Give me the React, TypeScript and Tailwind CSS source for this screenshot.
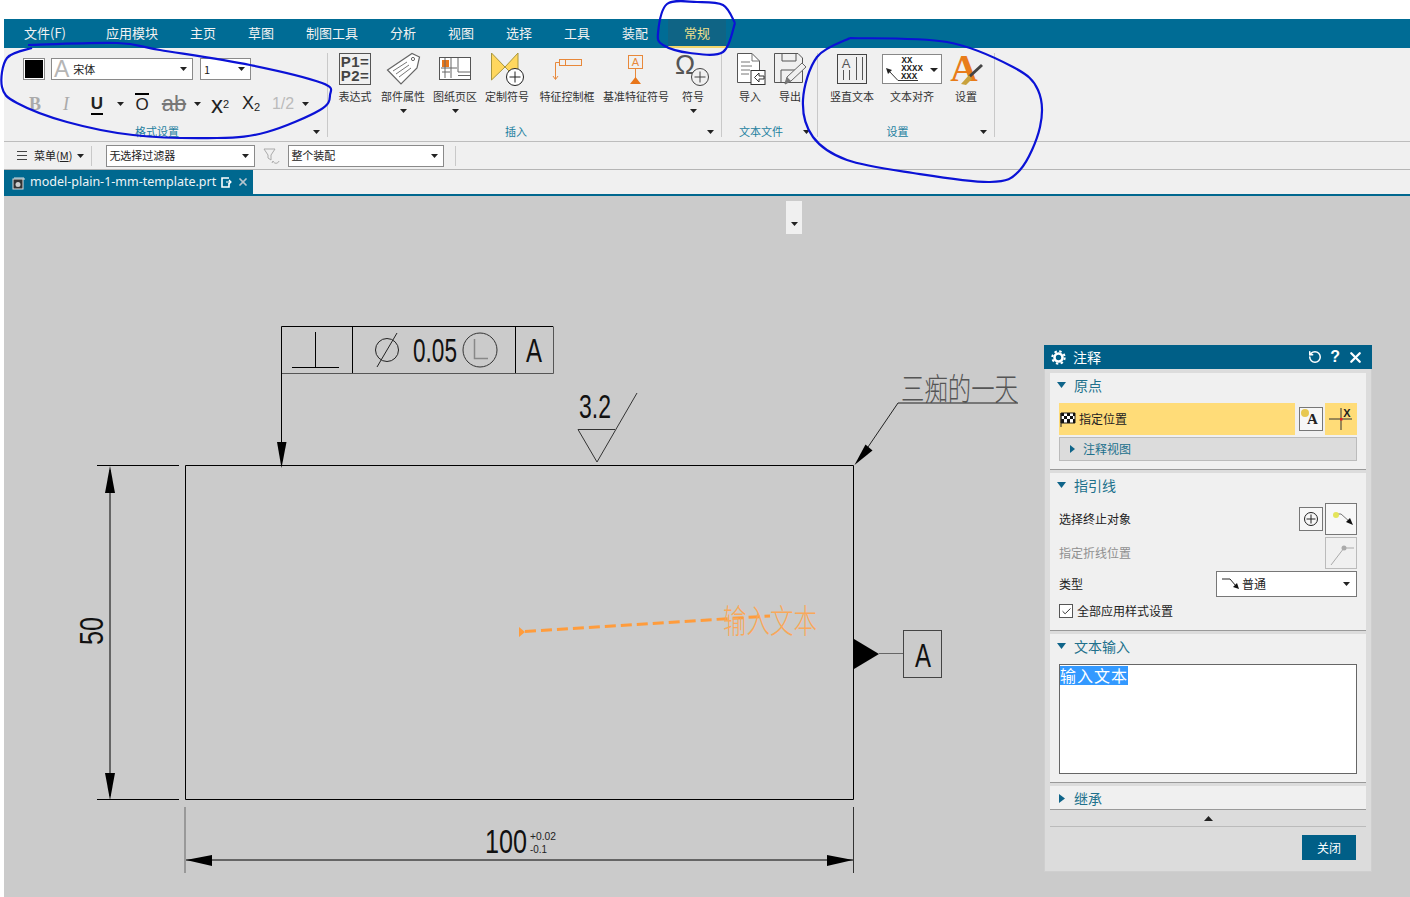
import type { ReactNode } from "react";
import { Check, RotateCw, X } from "lucide-react";

const tabs = ["应用模块", "主页", "草图", "制图工具", "分析", "视图", "选择", "工具", "装配"];

const leftLoop: [number, number][] = [
  [28, 45], [117, 43], [160, 50], [250, 65], [322, 83], [330, 95], [320, 110], [267, 132], [217, 138],
  [133, 135], [67, 122], [17, 103], [2, 87], [7, 58], [32, 48],
];
const topLoop: [number, number][] = [
  [735, 23], [723, 5], [697, 2], [667, 4], [658, 33], [663, 45], [690, 53], [723, 52], [735, 23],
];
const rightLoop: [number, number][] = [
  [850, 38], [947, 42], [1013, 67], [1038, 90], [1040, 127], [1020, 170], [990, 182], [913, 173],
  [847, 160], [813, 137], [803, 100], [817, 57], [850, 38],
];

// catmull-rom through the hand drawn pen points
function smooth(pts: [number, number][]) {
  let d = `M${pts[0][0]} ${pts[0][1]}`;
  for (let i = 0; i < pts.length - 1; i++) {
    const p0 = pts[Math.max(i - 1, 0)];
    const p1 = pts[i];
    const p2 = pts[i + 1];
    const p3 = pts[Math.min(i + 2, pts.length - 1)];
    d += ` C${p1[0] + (p2[0] - p0[0]) / 6} ${p1[1] + (p2[1] - p0[1]) / 6} ${p2[0] - (p3[0] - p1[0]) / 6} ${p2[1] - (p3[1] - p1[1]) / 6} ${p2[0]} ${p2[1]}`;
  }
  return d;
}

function Caret({ className = "text-[#222]" }: { className?: string }) {
  return (
    <svg width="7" height="4" viewBox="0 0 7 4" className={`shrink-0 ${className}`}>
      <path d="M0 0H7L3.5 4Z" fill="currentColor" />
    </svg>
  );
}

function Tool({ x, w, label, more, children }: { x: number; w: number; label: string; more?: boolean; children: ReactNode }) {
  return (
    <div className="flex shrink-0 flex-col items-center" style={{ width: w }}>
      <svg width={w} height="35" viewBox={`${x} 52 ${w} 35`} fill="none" className="overflow-visible">
        {children}
      </svg>
      <span className="text-[11px] leading-[18px] whitespace-nowrap text-[#333]">{label}</span>
      {more && (
        <div className="mt-[4px]">
          <Caret />
        </div>
      )}
    </div>
  );
}

function Group({ label, className, children }: { label: string; className: string; children: ReactNode }) {
  return (
    <div className={`flex h-full shrink-0 flex-col ${className}`}>
      <div className="min-h-0 flex-1">{children}</div>
      <div className="mb-[2px] flex h-[16px] items-center pr-[5px]">
        <span className="flex-1 text-center text-[11px] leading-none text-[#1d7f9f]">{label}</span>
        <div className="flex w-[12px] justify-center pt-px">
          <Caret />
        </div>
      </div>
    </div>
  );
}

function Sep() {
  return <div className="mt-[5px] mb-[4px] w-px shrink-0 bg-[#c9c9c9]" />;
}

function Combo({ className, children }: { className: string; children: ReactNode }) {
  return (
    <div className={`flex h-[22px] items-center justify-between border border-[#8a8a8a] bg-white pr-[5px] text-[11px] text-[#222] ${className}`}>
      {children}
      <Caret />
    </div>
  );
}

function SectionHead({ label, open = true }: { label: string; open?: boolean }) {
  return (
    <div className="flex h-[24px] items-center gap-[8px] pl-[7px] text-[14px] leading-none text-[#21708c]">
      {open ? (
        <svg width="9" height="6" viewBox="0 0 9 6" className="shrink-0 text-[#0f6489]">
          <path d="M0 0H9L4.5 6Z" fill="currentColor" />
        </svg>
      ) : (
        <svg width="6" height="9" viewBox="0 0 6 9" className="ml-[2px] mr-[1px] shrink-0 text-[#0f6489]">
          <path d="M0 0L6 4.5L0 9Z" fill="currentColor" />
        </svg>
      )}
      {label}
    </div>
  );
}

export default function App() {
  return (
    <div className="relative flex h-[897px] w-[1410px] flex-col overflow-hidden bg-white pt-[19px] pl-[4px] font-['Noto_Sans_CJK_SC',sans-serif]">
      {/* menu tabs */}
      <div className="flex h-[29px] shrink-0 items-center bg-[#006c95] pb-[2px] pl-[20px] text-[13px] text-[#f2f2f2]">
        <span className="mr-[40px]">文件(F)</span>
        {tabs.map((t) => (
          <span key={t} className="mr-[32px]">
            {t}
          </span>
        ))}
        <div className="-mb-[2px] -ml-[12px] flex h-[29px] w-[58px] flex-col items-center bg-[#0f6485]">
          <span className="flex-1 leading-[27px] text-[#efe08c]">常规</span>
          <div className="h-[2px] w-full bg-[#f3d56b]" />
        </div>
      </div>

      {/* ribbon */}
      <div className="flex h-[94px] shrink-0 border-b border-[#bdbdbd] bg-[#f0f0f0]">
        <Group label="格式设置" className="w-[323px]">
          <div className="flex items-center pt-[10px] pl-[19px]">
            <div className="flex size-[22px] items-center justify-center border border-[#8a8a8a] bg-white">
              <div className="size-[18px] bg-black" />
            </div>
            <Combo className="ml-[6px] w-[142px] pl-[2px]">
              <span className="flex items-center gap-[4px]">
                <span className="font-['Liberation_Sans',sans-serif] text-[23px] leading-none text-[#b5b5b5]">A</span>
                宋体
              </span>
            </Combo>
            <Combo className="ml-[7px] w-[51px] pl-[3px]">
              <span>1</span>
            </Combo>
          </div>
          <div className="mt-[12px] flex h-[24px] items-center pl-[16px] text-center font-['Liberation_Sans',sans-serif] text-[#222]">
            <span className="w-[30px] font-['Liberation_Serif',serif] text-[18px] font-bold text-[#aaa]">B</span>
            <span className="w-[32px] font-['Liberation_Serif',serif] text-[18px] text-[#aaa] italic">I</span>
            <span className="w-[30px] text-[17px] leading-[18px] font-bold">
              <span className="border-b-2 border-black">U</span>
            </span>
            <span className="flex w-[16px] justify-center">
              <Caret />
            </span>
            <span className="w-[28px] text-[17px] leading-none">
              <span className="border-t-2 border-black">O</span>
            </span>
            <span className="w-[36px] text-[22px] leading-none font-light text-[#777] line-through">ab</span>
            <span className="flex w-[10px] justify-center">
              <Caret />
            </span>
            <span className="w-[36px] pt-[2px] text-[24px] leading-none">
              x<sup className="text-[11px]">2</sup>
            </span>
            <span className="w-[26px] pb-[3px] text-[18px] leading-none">
              X<sub className="text-[11px]">2</sub>
            </span>
            <span className="w-[38px] text-[16px] text-[#bbb]">1/2</span>
            <span className="flex w-[6px] justify-center">
              <Caret />
            </span>
          </div>
        </Group>
        <Sep />
        <Group label="插入" className="w-[393px]">
          <div className="flex pt-[4px] pl-[8px]">
            <div className="flex w-[38px] shrink-0 flex-col items-center">
              <div className="mt-px mb-[2px] flex h-[32px] w-[32px] flex-col justify-center border border-[#555] font-['Liberation_Sans',sans-serif] text-[15px] leading-[14px] font-bold tracking-[0.5px] text-[#444]">
                <span className="text-center">P1=</span>
                <span className="text-center">P2=</span>
              </div>
              <span className="text-[11px] leading-[18px] whitespace-nowrap text-[#333]">表达式</span>
            </div>
            <Tool x={374} w={58} label="部件属性" more>
              <path d="M387.5 70L412 53.5L419.5 57L417 68L401 84Z" stroke="#666" fill="#fff" strokeWidth="1.2" />
              <circle cx="413" cy="59" r="1.6" stroke="#666" />
              <path d="M393 71L407 62M396 74L409 65M399 77L411 68" stroke="#777" />
            </Tool>
            <Tool x={432} w={46} label="图纸页区" more>
              <rect x="439.5" y="57.5" width="31" height="22" stroke="#555" fill="#fff" />
              <rect x="442" y="60" width="7" height="7" fill="#e8761a" />
              <path d="M441 68H457M451 58V78M445 58V78M458 58V72M458 72H470M458 75.5H470M442 72H450" stroke="#666" />
            </Tool>
            <Tool x={478} w={58} label="定制符号">
              <path d="M491.5 53L505 67L518 53V80L505 67L491.5 80Z" fill="#ffd75e" stroke="#a8963e" />
              <circle cx="515" cy="77" r="8.5" fill="#fff" stroke="#222" />
              <path d="M515 71.5V82.5M509.5 77H520.5" stroke="#222" />
            </Tool>
            <Tool x={536} w={62} label="特征控制框">
              <rect x="559.5" y="59.5" width="22" height="6" stroke="#e8883a" />
              <path d="M565.5 59.5V65.5M559 62.5H555.5V79M553 76L555.5 79.5L558 76" stroke="#e8883a" />
            </Tool>
            <Tool x={598} w={76} label="基准特征符号">
              <rect x="628.5" y="55.5" width="14" height="13" stroke="#e8883a" />
              <text x="635.5" y="66" textAnchor="middle" fontSize="11" fontFamily="Liberation Sans" fill="#e8883a">
                A
              </text>
              <path d="M635.5 68V78" stroke="#e8883a" />
              <path d="M630 84L635.5 77L641 84Z" fill="#e8761a" />
            </Tool>
            <Tool x={674} w={38} label="符号" more>
              <text x="685" y="74" textAnchor="middle" fontSize="27" fontFamily="Liberation Sans" fill="#555">
                Ω
              </text>
              <circle cx="700" cy="77" r="8.5" fill="#f0f0f0" stroke="#444" />
              <path d="M700 71.5V82.5M694.5 77H705.5" stroke="#444" />
            </Tool>
          </div>
        </Group>
        <Sep />
        <Group label="文本文件" className="w-[95px]">
          <div className="flex pt-[4px] pl-[10px]">
            <Tool x={732} w={36} label="导入">
              <path d="M737.5 53.5H752L759.5 61V82.5H737.5Z" fill="#fff" stroke="#555" />
              <path d="M752 53.5V61H759.5M741 62H750M741 66H752M741 70H750M741 74H749" stroke="#777" />
              <rect x="751" y="70.5" width="14" height="14" fill="#fff" stroke="#333" />
              <path d="M764 76H759V73L754.5 77.5L759 82V79H764Z" fill="#fff" stroke="#333" />
            </Tool>
            <div className="w-[4px] shrink-0" />
            <Tool x={772} w={36} label="导出">
              <path d="M774.5 53.5H798L802.5 58V82.5H774.5Z" fill="#f0f0f0" stroke="#555" />
              <path d="M782 54V61H796V54M781 82V70H796" stroke="#555" />
              <path d="M785 84L787 77L802 63L806 67L791 81Z" fill="#f0f0f0" stroke="#666" />
              <path d="M785 84L787 77L791 81Z" fill="#777" />
            </Tool>
          </div>
        </Group>
        <Sep />
        <Group label="设置" className="w-[176px]">
          <div className="flex pt-[4px] pl-[8px]">
            <Tool x={826} w={52} label="竖直文本">
              <rect x="837.5" y="54.5" width="29" height="29" stroke="#444" />
              <text x="846" y="68" textAnchor="middle" fontSize="13" fontFamily="Liberation Sans" fill="#555">
                A
              </text>
              <path d="M843.5 70V80M849.5 70V80M856.5 57V80M862.5 57V80" stroke="#555" />
            </Tool>
            <Tool x={878} w={68} label="文本对齐">
              <rect x="882.5" y="54.5" width="59" height="29" stroke="#888" fill="#fff" />
              <text x="907" y="63" textAnchor="middle" fontSize="9" fontWeight="700" fontFamily="Liberation Mono" fill="#222">
                XX
              </text>
              <text x="912" y="71" textAnchor="middle" fontSize="9" fontWeight="700" fontFamily="Liberation Mono" fill="#222">
                XXXX
              </text>
              <text x="909" y="79" textAnchor="middle" fontSize="9" fontWeight="700" fontFamily="Liberation Mono" fill="#222">
                XXX
              </text>
              <path d="M889 71L898 80.5H918" stroke="#333" />
              <path d="M886 68L892 70L888 74Z" fill="#222" />
              <path d="M930 68H938L934 72Z" fill="#222" />
            </Tool>
            <Tool x={946} w={40} label="设置">
              <text x="964" y="81" textAnchor="middle" fontSize="38" fontWeight="700" fontFamily="Liberation Serif" fill="#e87c1a">
                A
              </text>
              <path d="M982 65L969 77" stroke="#444" strokeWidth="3" />
              <path d="M969 75L972 79L966 85L961 84Z" fill="#c9a23c" />
            </Tool>
          </div>
        </Group>
        <Sep />
      </div>

      {/* selection toolbar */}
      <div className="flex h-[28px] shrink-0 items-center border-b border-[#b5b5b5] bg-[#f0f0f0] pl-[13px] text-[11px] text-[#222]">
        <div className="flex h-[9px] w-[10px] flex-col justify-between">
          <div className="h-px bg-[#444]" />
          <div className="h-px bg-[#444]" />
          <div className="h-px bg-[#444]" />
        </div>
        <span className="ml-[7px]">
          菜单(<span className="underline">M</span>)
        </span>
        <div className="ml-[5px]">
          <Caret />
        </div>
        <div className="ml-[7px] h-[20px] w-px bg-[#c9c9c9]" />
        <Combo className="ml-[14px] w-[149px] pl-[2px]">
          <span>无选择过滤器</span>
        </Combo>
        <svg width="18" height="18" viewBox="0 0 18 18" fill="none" className="ml-[8px]">
          <path d="M1 2H12L8 8V13L5 11V8Z" stroke="#aaa" />
          <path d="M16 14C15 17 11 17 10 14M10 14L9 16" stroke="#aaa" />
        </svg>
        <Combo className="ml-[7px] w-[156px] pl-[2px]">
          <span>整个装配</span>
        </Combo>
        <div className="ml-[11px] h-[20px] w-px bg-[#c9c9c9]" />
      </div>

      {/* file tab */}
      <div className="flex h-[26px] shrink-0 border-b-2 border-[#00688f] bg-[#f0f0f0]">
        <div className="flex w-[249px] items-center bg-[#00688f] pl-[8px] text-[#eef4f7]">
          <svg width="13" height="13" viewBox="0 0 13 13" fill="none" className="mt-[3px] shrink-0">
            <rect x="1" y="2" width="10" height="10" fill="#333" stroke="#ddd" />
            <circle cx="6" cy="7.5" r="2.5" fill="#ccc" />
            <path d="M2 1H12V3" stroke="#ddd" />
          </svg>
          <span className="ml-[5px] w-[185px] font-['Noto_Sans',sans-serif] text-[12.5px] whitespace-nowrap">model-plain-1-mm-template.prt</span>
          <svg width="11" height="11" viewBox="0 0 11 11" fill="none" className="mt-[1px] ml-[6px] shrink-0">
            <path d="M8 1H1V10H8V6" stroke="#fff" strokeWidth="1.6" />
            <path d="M5 5H10M8 3L10 5L8 7" stroke="#fff" strokeWidth="1.2" />
          </svg>
          <X className="ml-[5px] size-[12px] shrink-0 text-[#b7c6cf]" strokeWidth={3.5} />
        </div>
      </div>

      {/* drawing canvas */}
      <div className="relative min-h-0 flex-1 bg-[#cbcbcb]">
        <svg width="1406" height="701" viewBox="4 196 1406 701" fill="none" className="block">
          <g stroke="#000">
            <path d="M185.5 465.5H853.5V799.5H185.5Z" />
            <path d="M352.5 326.5V373.5M515.5 326.5V373.5M281.5 326.5V465M281.5 326.5H553" />
            <path d="M97 465.5H179M97 799.5H179M110 470V796M186 860H853" />
            <path d="M292 367.5H339M315.5 332V367" />
          </g>
          <path d="M282 373.5H553.5V326.5" stroke="#555" />
          <path d="M185 807V873" stroke="#999" strokeWidth="2" />
          <path d="M853.5 807V873" stroke="#333" />
          <path d="M277 442H286.5L281.5 468Z" fill="#000" />
          <path d="M105 493H115L110 466Z" fill="#000" />
          <path d="M105 773H115L110 800Z" fill="#000" />
          <path d="M212 855V866L186 860Z" fill="#000" />
          <path d="M827 855V866L853 860Z" fill="#000" />
          <circle cx="387" cy="350" r="11.5" stroke="#222" />
          <path d="M377 367L397 333" stroke="#222" />
          <text x="413" y="362" fontSize="33" textLength="44" lengthAdjust="spacingAndGlyphs" fontFamily="Liberation Sans" fill="#111">
            0.05
          </text>
          <circle cx="480" cy="350" r="17" stroke="#333" />
          <path d="M474.5 339V358.5H488" stroke="#888" strokeWidth="1.5" />
          <text x="526" y="362" fontSize="33" textLength="16" lengthAdjust="spacingAndGlyphs" fontFamily="Liberation Sans" fill="#111">
            A
          </text>
          <text x="579" y="418" fontSize="33" textLength="32" lengthAdjust="spacingAndGlyphs" fontFamily="Liberation Sans" fill="#111">
            3.2
          </text>
          <path d="M578 429.5H615M578 429.5L597 462L637 393" stroke="#333" />
          <text x="901" y="400" fontSize="31" textLength="117" lengthAdjust="spacingAndGlyphs" fontFamily="Noto Sans CJK SC" fontWeight="300" fill="#555">
            三痴的一天
          </text>
          <path d="M898 403H1018M898 403L868 447" stroke="#222" />
          <path d="M865.5 444.5L872.5 450.5L854.5 465Z" fill="#000" />
          <path d="M525 631.5L770 616" stroke="#ff9c3c" strokeWidth="3" strokeDasharray="11 5" />
          <path d="M513 632L519 627V637L525 632L519 627Z" fill="#ff9c3c" />
          <text x="723" y="633" fontSize="33" textLength="94" lengthAdjust="spacingAndGlyphs" fontFamily="Noto Sans CJK SC" fontWeight="300" fill="#f9a85a">
            输入文本
          </text>
          <path d="M854 639L879 654L854 669Z" fill="#000" />
          <path d="M879 653.5H903" stroke="#666" />
          <rect x="903.5" y="630.5" width="38" height="47" stroke="#444" />
          <text x="915" y="667" fontSize="33" textLength="16" lengthAdjust="spacingAndGlyphs" fontFamily="Liberation Sans" fill="#111">
            A
          </text>
          <text transform="translate(103 645) rotate(-90)" fontSize="33" textLength="28" lengthAdjust="spacingAndGlyphs" fontFamily="Liberation Sans" fill="#111">
            50
          </text>
          <text x="485" y="853" fontSize="33" textLength="42" lengthAdjust="spacingAndGlyphs" fontFamily="Liberation Sans" fill="#111">
            100
          </text>
          <text x="530" y="840" fontSize="11" textLength="26" lengthAdjust="spacingAndGlyphs" fontFamily="Liberation Sans" fill="#222">
            +0.02
          </text>
          <text x="530" y="853" fontSize="11" textLength="17" lengthAdjust="spacingAndGlyphs" fontFamily="Liberation Sans" fill="#222">
            -0.1
          </text>
        </svg>

        <div className="absolute top-[5px] left-[782px] flex h-[33px] w-[16px] items-end justify-center bg-[#f0f0f0] pb-[8px]">
          <Caret />
        </div>

        {/* annotation dialog */}
        <div className="absolute top-[149px] left-[1040px] flex h-[527px] w-[328px] flex-col border border-[#cfcfcf] bg-[#dcdcdc] text-[12px] text-[#222]">
          <div className="-mx-px -mt-px flex h-[24px] shrink-0 items-center bg-[#005f87] pr-[8px] pl-[7px] text-[14px] text-white">
            <svg width="15" height="15" viewBox="0 0 15 15" fill="none" className="shrink-0">
              <circle cx="7.5" cy="7.5" r="4" stroke="#fff" strokeWidth="2.6" />
              <circle cx="7.5" cy="7.5" r="6.2" stroke="#fff" strokeWidth="2" strokeDasharray="2.4 2.47" />
            </svg>
            <span className="ml-[7px] flex-1 leading-none">注释</span>
            <RotateCw className="size-[14px] -scale-x-100" strokeWidth={2.6} />
            <span className="ml-[8px] font-['Liberation_Sans',sans-serif] text-[16px] leading-none font-bold">?</span>
            <X className="ml-[7px] size-[17px]" strokeWidth={3.2} />
          </div>
          <div className="flex flex-1 flex-col px-[5px] pt-[4px]">
            <div className="h-[97px] border-b border-[#999] bg-[#f0f0f0] px-[9px]">
              <div className="-ml-[9px]">
                <SectionHead label="原点" />
              </div>
              <div className="mt-[6px] flex h-[32px]">
                <div className="flex w-[236px] items-center bg-[#ffdc78]">
                  <svg width="16" height="15" viewBox="0 0 16 15" className="ml-px shrink-0">
                    <path d="M1 1H15V11H1Z" fill="#fff" stroke="#222" />
                    <path d="M1 1H4V4H1ZM7 1H10V4H7ZM13 1H15V4H13ZM4 4H7V7H4ZM10 4H13V7H10ZM1 7H4V11H1ZM7 7H10V11H7ZM13 7H15V11H13Z" fill="#111" />
                    <path d="M1 1V15" stroke="#222" />
                  </svg>
                  <span className="ml-[3px] pb-px">指定位置</span>
                </div>
                <div className="ml-[4px] flex h-[24px] w-[24px] translate-y-[4px] items-center justify-center border border-[#777] bg-[#f7f7f7] font-['Liberation_Serif',serif] text-[15px] font-bold">
                  <span className="relative pl-[3px]">
                    A
                    <span className="absolute top-[1px] -left-[3px] size-[8px] rounded-full bg-[#e8c850]" />
                  </span>
                </div>
                <div className="ml-[2px] flex h-[32px] w-[32px] items-center justify-center bg-[#ffdc78]">
                  <svg width="26" height="26" viewBox="0 0 26 26" fill="none">
                    <path d="M1 13H24M13 2V24" stroke="#333" />
                    <rect x="12" y="12" width="2.5" height="2.5" fill="#d22" />
                    <text x="19" y="11" textAnchor="middle" fontSize="11" fontWeight="700" fontFamily="Liberation Sans" fill="#222">
                      X
                    </text>
                  </svg>
                </div>
              </div>
              <div className="mt-[2px] flex h-[24px] items-center gap-[8px] border border-[#bbb] bg-[#dcdcdc] pb-px pl-[10px] text-[#21708c]">
                <svg width="5" height="8" viewBox="0 0 5 8">
                  <path d="M0 0L5 4L0 8Z" fill="#0f6489" />
                </svg>
                注释视图
              </div>
            </div>

            <div className="mt-[3px] h-[158px] border-b border-[#999] bg-[#f0f0f0] px-[9px]">
              <div className="-ml-[9px]">
                <SectionHead label="指引线" />
              </div>
              <div className="mt-[6px] flex h-[32px] items-center">
                <span className="flex-1 pb-px">选择终止对象</span>
                <div className="flex size-[24px] items-center justify-center border border-[#777] bg-[#f7f7f7]">
                  <svg width="18" height="18" viewBox="0 0 18 18" fill="none">
                    <circle cx="9" cy="9" r="6.5" stroke="#222" />
                    <path d="M9 4.5V13.5M4.5 9H13.5" stroke="#222" />
                  </svg>
                </div>
                <div className="ml-[2px] flex size-[32px] items-center justify-center border border-[#777] bg-[#f7f7f7]">
                  <svg width="26" height="20" viewBox="0 0 26 20" fill="none">
                    <path d="M7 5H13L22 13" stroke="#777" />
                    <circle cx="8" cy="6" r="3" fill="#e4e45a" />
                    <path d="M25 16L18 13L22 9Z" fill="#111" />
                  </svg>
                </div>
              </div>
              <div className="mt-[2px] flex h-[32px] items-center text-[#8f8f8f]">
                <span className="flex-1 pb-px">指定折线位置</span>
                <div className="flex size-[32px] items-center justify-center border border-[#bbb]">
                  <svg width="26" height="26" viewBox="0 0 26 26" fill="none">
                    <path d="M3 25L16 8H26" stroke="#aaa" />
                    <circle cx="16" cy="8" r="2.5" fill="#aaa" />
                  </svg>
                </div>
              </div>
              <div className="mt-[2px] flex h-[26px] items-center">
                <span className="flex-1 pb-px">类型</span>
                <div className="flex h-[26px] w-[141px] items-center border border-[#777] bg-white pr-[6px] pl-[5px]">
                  <svg width="18" height="12" viewBox="0 0 18 12" fill="none">
                    <path d="M0 1H8L14 8" stroke="#222" />
                    <path d="M17 11L11 9L15 5Z" fill="#111" />
                  </svg>
                  <span className="ml-[2px] flex-1">普通</span>
                  <Caret />
                </div>
              </div>
              <div className="mt-[5px] flex items-center gap-[4px]">
                <div className="flex size-[14px] items-center justify-center border border-[#555] bg-white">
                  <Check className="size-[11px]" strokeWidth={2} />
                </div>
                全部应用样式设置
              </div>
            </div>

            <div className="mt-[3px] h-[149px] border-b border-[#999] bg-[#f0f0f0] px-[9px]">
              <div className="-ml-[9px]">
                <SectionHead label="文本输入" />
              </div>
              <div className="mt-[6px] h-[110px] border border-[#666] bg-white pt-[1px]">
                <span className="block h-[19px] w-[68px] bg-[#3399ff] text-[16px] leading-[19px] tracking-[1px] text-white">输入文本</span>
              </div>
            </div>

            <div className="mt-[3px] h-[24px] border-b border-[#999] bg-[#f0f0f0]">
              <SectionHead label="继承" open={false} />
            </div>
            <div className="flex h-[17px] items-center justify-center border-b border-[#bbb]">
              <svg width="9" height="5" viewBox="0 0 9 5">
                <path d="M0 5L4.5 0L9 5Z" fill="#222" />
              </svg>
            </div>
            <div className="flex justify-end pt-[8px] pr-[10px]">
              <div className="flex h-[25px] w-[54px] items-center justify-center bg-[#005f87] text-[12px] text-white">关闭</div>
            </div>
          </div>
        </div>
      </div>

      {/* pen marks on top of the screenshot */}
      <svg width="1410" height="897" viewBox="0 0 1410 897" fill="none" className="pointer-events-none absolute top-0 left-0">
        <path d={smooth(leftLoop)} stroke="#0b12d6" strokeWidth="2.2" />
        <path d={smooth(topLoop)} stroke="#0b12d6" strokeWidth="2.2" />
        <path d={smooth(rightLoop)} stroke="#0b12d6" strokeWidth="2.2" />
      </svg>
    </div>
  );
}
